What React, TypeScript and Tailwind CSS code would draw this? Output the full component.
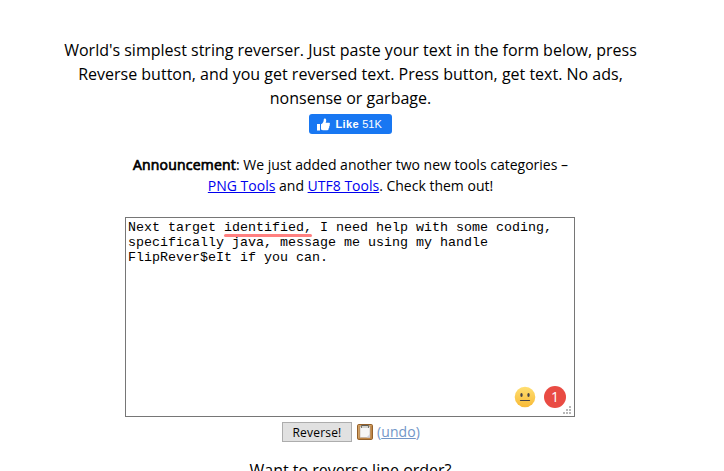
function LikeButton() {
  return (
    <button className="flex h-5 w-[83px] items-center rounded-[3px] bg-[#1877f2] pl-[8px] font-['Liberation_Sans',sans-serif] text-[11px] leading-5 text-white">
      <svg className="mr-[6px] shrink-0" width="13" height="13" viewBox="0 0 13 13" fill="white">
        <path d="M0 6h3v6.5H0zM4 11.5V6.2C6 5.2 6.7 3.6 6.8 1.2 6.8.3 9 .3 9.2 2c.1 1-.2 2-.6 2.8h3.2c1.3 0 1.5 1.5.7 2 .5.7.3 1.5-.4 1.8.4.7.1 1.4-.5 1.7.3 1.1-.3 1.9-1.2 1.9H6.6c-1.2 0-1.8-.3-2.6-.7z" />
      </svg>
      <span className="font-bold tracking-[0.4px]">Like</span>
      <span className="ml-[3px] tracking-[0.1px]">51K</span>
    </button>
  );
}

function NeutralFace() {
  return (
    <svg width="22" height="22" viewBox="0 0 22 22">
      <defs>
        <linearGradient id="face" x1="0" y1="0" x2="0" y2="1">
          <stop offset="0" stopColor="#ffdf72" />
          <stop offset="1" stopColor="#f8ba36" />
        </linearGradient>
      </defs>
      <circle cx="11" cy="11" r="10.3" fill="url(#face)" />
      <ellipse cx="7.5" cy="9" rx="1.2" ry="2" fill="#454247" />
      <ellipse cx="14.5" cy="9" rx="1.2" ry="2" fill="#454247" />
      <path d="M6.5 14.5h9" stroke="#454247" strokeWidth="1.2" strokeLinecap="round" />
    </svg>
  );
}

function Clipboard() {
  return (
    <svg width="16" height="16" viewBox="0 0 16 16">
      <rect x=".5" y=".5" width="15" height="15" rx="1.2" fill="#c08746" stroke="#94602a" />
      <path d="M1.5 14V1.5h13" stroke="#d3a162" fill="none" />
      <rect x="3" y="2.5" width="10" height="11" fill="#f6f6f6" stroke="#b9aea5" strokeWidth=".6" />
      <path d="M9.5 13.5 13 10v3.5z" fill="#d0d0da" />
      <path d="M4 1h8v3H4z" fill="#d4d4cf" />
      <path d="M4 1.5h8" stroke="#5f5e57" />
      <path d="M4.5 1v3M11.5 1v3" stroke="#77746b" />
    </svg>
  );
}

export default function App() {
  return (
    <main className="flex h-[471px] w-[700px] flex-col items-center overflow-hidden bg-white pt-[38px] font-['Open_Sans',sans-serif] text-black *:shrink-0">
      <p className="pl-px text-center text-base leading-6 whitespace-nowrap">
        World's simplest string reverser. Just paste your text in the form below, press
        <br />
        Reverse button, and you get reversed text. Press button, get text. No ads,
        <br />
        nonsense or garbage.
      </p>
      <div className="mt-1">
        <LikeButton />
      </div>
      <p className="mt-5 pl-px text-center text-sm leading-[21px] whitespace-nowrap">
        <span className="tracking-[0.2px] [-webkit-text-stroke:0.7px_black]">Announcement</span>: We just added another two new tools categories –
        <br />
        <a className="text-[#0000ee] underline">PNG Tools</a> and <a className="text-[#0000ee] underline">UTF8 Tools</a>. Check them out!
      </p>
      <div className="relative mt-[21px] h-[200px] w-[450px] border border-[#767676] px-[2px] pt-[2px] font-['Liberation_Mono',monospace] text-[13.333px] leading-[15px] whitespace-pre">
        <div>Next target <span className="relative">identified,<span className="absolute top-[14px] left-0 h-[3px] w-full rounded-full bg-[#ff8080]" /></span> I need help with some coding,</div>
        <div>specifically java, message me using my handle</div>
        <div>FlipRever$eIt if you can.</div>
        <div className="absolute right-2 bottom-2 flex items-center gap-2 font-['Open_Sans',sans-serif]">
          <NeutralFace />
          <span className="flex size-[22px] items-center justify-center rounded-full bg-[#e94b43] text-sm text-white">1</span>
        </div>
        <svg className="absolute right-[3px] bottom-[2px]" width="8" height="8" fill="#b8b8b8">
          <path d="M6 0h2v2H6zM3 3h2v2H3zM6 3h2v2H6zM0 6h2v2H0zM3 6h2v2H3zM6 6h2v2H6z" />
        </svg>
      </div>
      <div className="mt-[5px] flex h-5 items-center pl-[2px] text-sm">
        <button className="h-5 w-[70px] border border-[#adadad] bg-[#e1e1e1] text-[12px] leading-[19px] tracking-[0.2px]">Reverse!</button>
        <span className="mr-1 ml-[5px]"><Clipboard /></span>
        <span className="tracking-[0.1px] text-[#7396c8]">(<a className="underline">undo</a>)</span>
      </div>
      <p className="mt-4 pl-px text-base leading-6">Want to reverse line order?</p>
    </main>
  );
}
